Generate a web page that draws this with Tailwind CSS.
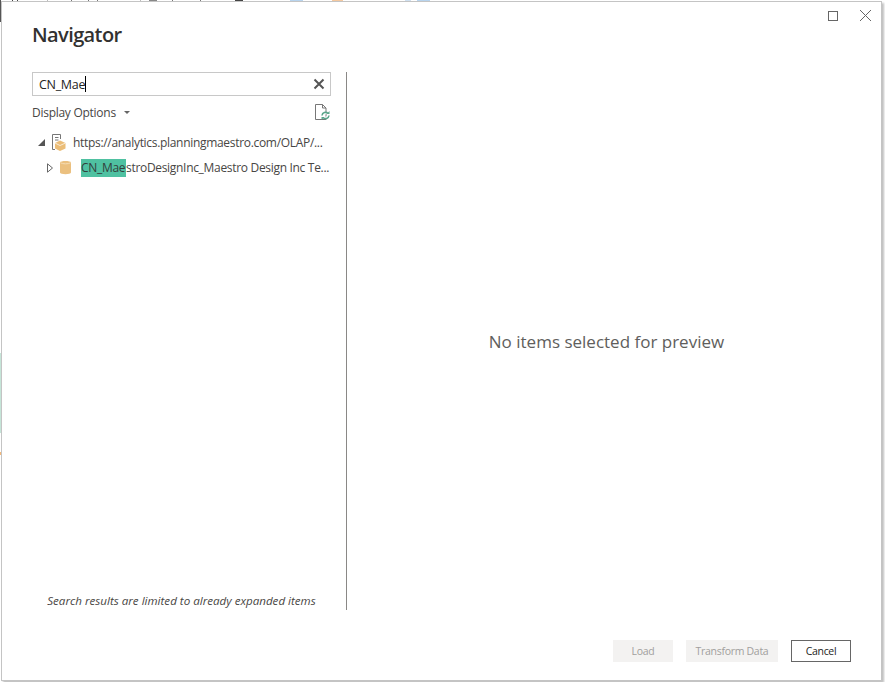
<!DOCTYPE html>
<html><head><meta charset="utf-8">
<script src="https://cdn.jsdelivr.net/npm/@tailwindcss/browser@4"></script>
</head>
<body class="bg-white">
<div class="relative w-[885px] h-[682px] overflow-hidden bg-white font-['Open_Sans','Noto_Sans',sans-serif]">
  <div class="absolute left-0 top-[353px] w-px h-[80px] bg-[#c5e5d8]"></div>
  <div class="absolute left-0 top-[452px] w-px h-[3px] bg-[#f5b97a]"></div>
  <div class="absolute left-0 top-0 w-px h-[22px] bg-[#555]"></div>
  <div class="absolute left-0 top-0 w-[885px] h-px flex">
    <span class="ml-[12px] w-px bg-[#444]"></span><span class="ml-[4px] w-px bg-[#444]"></span><span class="ml-[29px] w-px bg-[#bbb]"></span><span class="ml-[23px] w-px bg-[#777]"></span><span class="ml-[16px] w-px bg-[#777]"></span><span class="ml-[8px] w-px bg-[#777]"></span><span class="ml-[42px] w-px bg-[#bbb]"></span><span class="ml-[8px] w-[8px] bg-[#888]"></span><span class="ml-[15px] w-px bg-[#777]"></span><span class="ml-[27px] w-px bg-[#777]"></span><span class="ml-[34px] w-[8px] bg-[#444]"></span><span class="ml-[47px] w-[13px] bg-[#b8d4ee]"></span><span class="ml-[29px] w-[11px] bg-[#f5c9a0]"></span><span class="ml-[62px] w-[6px] bg-[#cfe0f0]"></span><span class="ml-[6px] w-[13px] bg-[#b8d4ee]"></span>
  </div>
  <div class="ml-px mt-px w-[881px] h-[680px] border border-[#c4c4c4] bg-white shadow-[2px_2px_2px_rgba(0,0,0,0.25)] flex flex-col relative">
    <div class="absolute right-[9px] top-[7px] flex items-center gap-[21px]">
      <div class="w-[10px] h-[10px] border border-[#666]"></div>
      <svg class="shrink-0" width="13" height="13" viewBox="0 0 13 13"><path d="M1 1L12 12M12 1L1 12" stroke="#666" stroke-width="1" fill="none"/></svg>
    </div>
    <h1 class="ml-[30px] mt-[18px] h-[30px] text-[20px] leading-[30px] font-semibold tracking-[-0.6px] text-[#323130]">Navigator</h1>
    <div class="flex mt-[22px] h-[539px]">
      <div class="ml-[30px] w-[299px] shrink-0 flex flex-col">
        <div class="h-[24px] border border-[#c8c8c8] flex items-center pl-[6px] pr-[4px] text-[12.5px] tracking-[-0.3px] text-[#252423]">
          <span class="pt-[2px]">CN_Mae</span><span class="w-px h-[16px] bg-black"></span>
          <svg class="ml-auto mr-px shrink-0" width="12" height="12" viewBox="0 0 12 12"><path d="M1.5 1.5L10.5 10.5M10.5 1.5L1.5 10.5" stroke="#555" stroke-width="2" fill="none"/></svg>
        </div>
        <div class="flex items-center h-[24px] mt-[5px] text-[12px] tracking-[-0.27px] text-[#484644]">
          <span>Display Options</span>
          <span class="ml-[8px] w-0 h-0 border-l-[3px] border-r-[3px] border-t-[3px] border-l-transparent border-r-transparent border-t-[#666] mb-[2px]"></span>
          <svg class="ml-auto mb-[2px] shrink-0" width="17" height="18" viewBox="0 0 17 18">
            <path d="M1.5 1.5H8.5L12 5V16.5H1.5Z M8.5 1.5V5H12" stroke="#777" stroke-width="1" fill="white"/>
            <path d="M8 12.5A3.5 3.5 0 0 1 14 10.5 M15 12.5A3.5 3.5 0 0 1 9 14.5" stroke="#5aa58a" stroke-width="1.6" fill="white"/>
            <path d="M12.5 11H15.5V8Z M10.5 14H7.5V17Z" fill="#5aa58a"/>
          </svg>
        </div>
        <div class="flex items-center h-[25px] mt-[5px] text-[12px] tracking-[-0.31px] text-[#484644]">
          <span class="ml-[6px] shrink-0 w-[7px] h-[7px] bg-[#555] [clip-path:polygon(100%_0,100%_100%,0_100%)]"></span>
          <svg class="ml-[7px] shrink-0" width="14" height="18" viewBox="0 0 14 18">
            <path d="M.5 .5H8.5V5M3 15.5H.5V.5" stroke="#777" fill="none"/><path d="M3 3.5H6.5M3 6H6.5" stroke="#777" fill="none"/>
            <path d="M8 6.5L13.5 9V14.5L8 17L3 14.5V9Z" fill="#ebbd78"/><path d="M3 9L8 11.5L13.5 9" stroke="#fff" stroke-width=".7" fill="none"/>
          </svg>
          <span class="ml-[7px] whitespace-nowrap">https://analytics.planningmaestro.com/OLAP/...</span>
        </div>
        <div class="flex items-center h-[25px] text-[12px] tracking-[-0.31px] text-[#484644]">
          <svg class="ml-[15px] shrink-0" width="6" height="10" viewBox="0 0 6 10"><path d="M.5 .8L5.5 5L.5 9.2Z" stroke="#666" fill="white"/></svg>
          <svg class="ml-[7px] shrink-0" width="11" height="15" viewBox="0 0 11 15"><path d="M0 2.5C0 .5 11 .5 11 2.5V12.5C11 14.8 0 14.8 0 12.5Z" fill="#ebc07f"/><path d="M.5 2.8C2.5 4.2 8.5 4.2 10.5 2.8" stroke="#f5dcb5" fill="none"/></svg>
          <span class="ml-[10px] whitespace-nowrap"><span class="bg-[#4fc1a1] text-[#33403c] inline-block w-[45px] overflow-hidden align-bottom">CN_Mae</span>stroDesignInc_Maestro Design Inc Te...</span>
        </div>
        <p class="mt-auto mb-[1px] text-center text-[11.6px] italic text-[#484644] h-[18px] leading-[18px] whitespace-nowrap">Search results are limited to already expanded items</p>
      </div>
      <div class="ml-[15px] w-px h-[538px] bg-[#8a8886]"></div>
      <div class="flex-1 flex items-center justify-center text-[17px] text-[#605e5c] pr-[15px] pt-[1px]">No items selected for preview</div>
    </div>
    <div class="flex justify-end mt-[29px] mr-[30px] gap-[13px] text-[10.5px] tracking-[-0.3px]">
      <div class="w-[60px] h-[22px] bg-[#f3f2f1] text-[#a19f9d] flex items-center justify-center pt-px">Load</div>
      <div class="w-[92px] h-[22px] bg-[#f3f2f1] text-[#a19f9d] flex items-center justify-center pt-px">Transform Data</div>
      <div class="w-[60px] h-[22px] border border-[#666] text-[#252423] flex items-center justify-center pt-px">Cancel</div>
    </div>
  </div>
</div>
</body></html>
